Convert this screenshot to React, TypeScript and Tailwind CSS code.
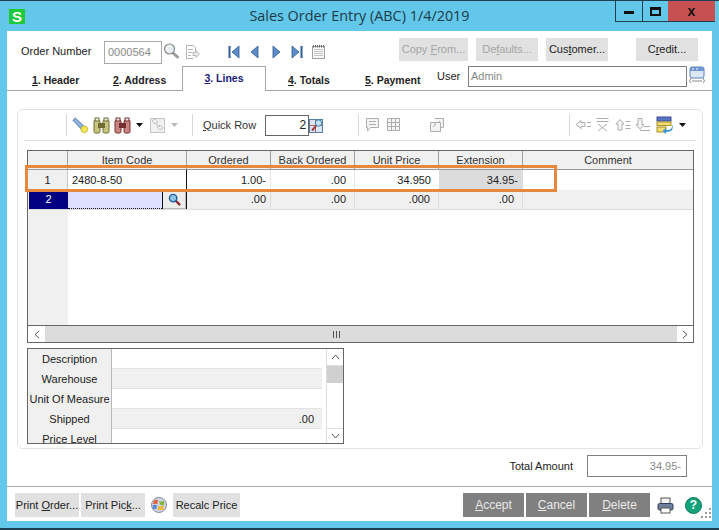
import React from "react";

const COLS = "grid grid-cols-[40px_119px_84px_84px_84px_84px_1fr]";

function Lens({ className = "" }: { className?: string }) {
  return (
    <svg viewBox="0 0 16 16" className={className}>
      <path d="M9.5 9.5 14.5 14" stroke="#9a9a9a" strokeWidth="3" strokeLinecap="round" />
      <circle cx="6.5" cy="6" r="5" fill="#e8eef2" stroke="#8a8a8a" strokeWidth="1.2" />
      <path d="M3.5 6a3 3 0 0 1 3-3" stroke="#fff" strokeWidth="1.2" fill="none" />
    </svg>
  );
}

function DocArrow() {
  return (
    <svg viewBox="0 0 16 16" className="w-4 h-4 ml-[5px]" fill="none" stroke="#b5b5b5">
      <path d="M2.5 1.5h7l2 2v4M2.5 1.5v13h7" />
      <path d="M4 5.5h5M4 8.5h4M4 11.5h3" />
      <path d="M9 8.5h3v-2l3.5 3.5-3.5 3.500v-2H9z" fill="#eee" />
    </svg>
  );
}

function Nav({ d, bar }: { d: string; bar?: "l" | "r" }) {
  return (
    <svg viewBox="0 0 12 14" className="w-3 h-[14px]">
      <path d={d} fill="#5b8cc8" stroke="#2f5c96" strokeWidth="0.8" />
      {bar === "l" && <rect x="0.5" y="1" width="2" height="12" fill="#2f5c96" />}
      {bar === "r" && <rect x="9.5" y="1" width="2" height="12" fill="#2f5c96" />}
    </svg>
  );
}

function Calendar() {
  return (
    <svg viewBox="0 0 13 14" className="w-[13px] h-[14px]" fill="none" stroke="#c4c4c4">
      <rect x="0.5" y="1.5" width="12" height="12" fill="#f8f8f8" stroke="#a0a0a0" />
      <path d="M1.5 0v2.500M3.500 0v2.500M5.500 0v2.500M7.500 0v2.500M9.500 0v2.500M11.500 0v2.500" stroke="#666" />
      <path d="M2 4.500h9M2 6.500h9M2 8.500h9M2 10.500h9" />
    </svg>
  );
}

function Flashlight() {
  return (
    <svg viewBox="0 0 18 18" className="w-[17px] h-[17px]">
      <path d="M1 3.5 3.5 1l9 8.500-3 3z" fill="#8db2de" stroke="#5a7ca8" />
      <circle cx="13" cy="13" r="3.5" fill="#f4e85a" stroke="#c2b52c" />
    </svg>
  );
}

function Binoculars({ fill, stroke }: { fill: string; stroke: string }) {
  return (
    <svg viewBox="0 0 17 17" className="w-[17px] h-[17px]">
      <rect x="1" y="3" width="6" height="13" rx="1.5" fill={fill} stroke={stroke} />
      <rect x="10" y="3" width="6" height="13" rx="1.5" fill={fill} stroke={stroke} />
      <rect x="2" y="1" width="4" height="3" fill="#eee" stroke={stroke} />
      <rect x="11" y="1" width="4" height="3" fill="#eee" stroke={stroke} />
      <rect x="5" y="6" width="7" height="5" fill={stroke} />
    </svg>
  );
}

function Caret({ color = "#111" }: { color?: string }) {
  return (
    <svg viewBox="0 0 7 4" className="w-[7px] h-1">
      <path d="M0 0h7L3.5 4z" fill={color} />
    </svg>
  );
}

function FadedLinks() {
  return (
    <svg viewBox="0 0 17 17" className="w-[17px] h-[17px]" fill="none" stroke="#c4c4c4">
      <rect x="1.5" y="1.5" width="14" height="14" fill="#f1f1f1" />
      <path d="M3 4l3-2 3 3-3 2zM8 10l3-2 3 3-3 2zM6 6l5 4" />
    </svg>
  );
}

function RowFinder() {
  return (
    <svg viewBox="0 0 15 15" className="w-[15px] h-[15px]">
      <rect x="0.5" y="1.5" width="13" height="13" fill="#dbe6f4" stroke="#5c7fa8" />
      <path d="M1 7.5h12M6.5 2v12" stroke="#b0605e" />
      <circle cx="9.5" cy="5" r="3.2" fill="#bfe3f2" stroke="#3f7fb0" />
      <path d="M7 8 3 12.5" stroke="#a13b3b" strokeWidth="2" />
    </svg>
  );
}

function Gray({ kind }: { kind: string }) {
  const paths: Record<string, React.ReactNode> = {
    note: <path d="M1.5 1.5h12v9h-8l-3 3.5v-3.5h-1zM4 4.5h7M4 7.500h7" />,
    table: <path d="M1.5 1.5h12v12h-12zM1.5 5.500h12M1.5 9.500h12M5.500 1.500v12M9.500 1.500v12" />,
    pages: <path d="M5.500 1.500h9v9h-3M1.500 5.500h10v9h-10zM4 10l3-3h-2M11 4l-2 2" />,
    left: <path d="M1 7.500 6 3.500v2h4v4H6v2zM12 5.500h4M12 9.500h4" />,
    del: <path d="M1.500 1.500h12M1.500 4.500h12M3 7l9 7M12 7l-9 7" />,
    up: <path d="M1 7 5 2.500 9 7H7v6H3V7zM10.500 4.500h5M10.500 8.500h5M10.500 11.500h5" />,
    down: <path d="M3 1.500h4v6h2l-4 4.500-4-4.500h2zM9 9.500h6M5 13.500h10" />,
  };
  return (
    <svg viewBox="0 0 16 16" className="w-4 h-4" fill="#f4f4f4" stroke="#adadad">
      {paths[kind]}
    </svg>
  );
}

function MoveLines() {
  return (
    <svg viewBox="0 0 18 18" className="w-[18px] h-[18px]">
      <rect x="1" y="1" width="14" height="4" fill="#5b78c6" stroke="#3c4f8f" />
      <rect x="1" y="6" width="14" height="3.5" fill="#f4dd72" stroke="#a89225" />
      <rect x="1" y="11" width="9" height="5" fill="#f4dd72" stroke="#a89225" />
      <path d="M16 8c1 5-2 6-6 6v-2l-3.5 3 3.500 3v-2c6 0 8-3 6-8z" fill="#3f97d8" />
    </svg>
  );
}

function LookupSmall() {
  return (
    <svg viewBox="0 0 14 14" className="w-[13px] h-[13px]">
      <path d="M8 8l5 5" stroke="#8a3030" strokeWidth="2.5" />
      <circle cx="5.5" cy="5.5" r="4" fill="#8fc4ea" stroke="#1f5d99" strokeWidth="1.5" />
    </svg>
  );
}

function UserIcon() {
  return (
    <svg viewBox="0 0 16 18" className="w-4 h-[18px]">
      <rect x="1" y="1" width="14" height="11" rx="2" fill="#dde6f4" stroke="#5f83b7" />
      <rect x="1" y="1" width="14" height="4" rx="1.5" fill="#6c94d0" />
      <path d="M3 3h2M7 3h2" stroke="#fff" />
      <path d="M2 12 0.5 15 2 17M14 12l1.5 3L14 17M3 15h10" stroke="#8a8a8a" fill="none" />
    </svg>
  );
}

function Orb() {
  return (
    <svg viewBox="0 0 16 16" className="w-4 h-4">
      <circle cx="8" cy="8" r="7.5" fill="#cfd6e6" stroke="#8c8c99" />
      <path d="M3 3.5c1.5-1 3-1 4 0l-.8 3.8c-1.4-.7-2.8-.7-4.2 0z" fill="#e2603a" />
      <path d="M8.2 3.700c1.5 1 3 1 4.600 0l.6 3.800c-1.500.9-3 .9-4.500 0z" fill="#7fb73c" />
      <path d="M1.800 8.300c1.400-.7 2.800-.7 4.200 0l-.6 4c-1.400-.7-2.500-.7-3.600 0z" fill="#5a88d8" />
      <path d="M7 8.500c1.500.9 3 .9 6.200 0l-.8 4c-2 .9-3.600.9-6 0z" fill="#eab93a" />
    </svg>
  );
}

function Printer() {
  return (
    <svg viewBox="0 0 17 17" className="w-[17px] h-[17px]">
      <rect x="4" y="1" width="9" height="6" fill="#f1f1f1" stroke="#555" />
      <rect x="1" y="6.5" width="15" height="6.5" rx="1.5" fill="#6d7f9c" stroke="#34405a" />
      <rect x="4" y="11" width="9" height="5" fill="#fff" stroke="#555" />
    </svg>
  );
}

function HeadCell({ children }: { children?: React.ReactNode }) {
  return (
    <div className="border-r border-[#a0a0a0] bg-[#f0f0f0] flex items-end justify-center pb-[1px] text-[#333] last:border-r-0">
      {children}
    </div>
  );
}

function Btn({ children, w, off }: { children: React.ReactNode; w: string; off?: boolean }) {
  return (
    <div className={`${w} h-[23px] bg-[#e1e1e1] text-center leading-[23px] ${off ? "text-[#a5a5a5]" : "text-[#222]"}`}>
      {children}
    </div>
  );
}

function DarkBtn({ children }: { children: React.ReactNode }) {
  return (
    <div className="w-[61px] h-[24px] bg-[#808080] text-[#e9e9e9] text-center leading-[24px] text-[12px]">
      {children}
    </div>
  );
}

const DETAILS = [
  { label: "Description", bg: "bg-white", h: "h-[20px]" },
  { label: "Warehouse", bg: "bg-[#f0f0f0]", h: "h-[20px]" },
  { label: "Unit Of Measure", bg: "bg-white", h: "h-[20px]" },
  { label: "Shipped", bg: "bg-[#f0f0f0]", h: "h-[20px]", value: ".00" },
  { label: "Price Level", bg: "bg-white", h: "h-[14px]" },
];

export default function App() {
  return (
    <div className="relative w-[719px] h-[530px] overflow-hidden bg-[#62c7e9] border-t border-b-2 border-[#1d3f52] font-['Liberation_Sans',Arial,sans-serif] text-[11px] text-[#222] flex flex-col">
      {/* title bar */}
      <div className="h-[30px] grid grid-cols-[1fr_auto_1fr] shrink-0">
        <div className="pl-[9px] pt-[8px]">
          <div className="w-4 h-[15px] bg-[#1fc93a] text-white font-bold text-[15px] leading-[15px] text-center">S</div>
        </div>
        <div className="pt-[5px] text-[14.4px] leading-[20px] text-[#1c3a4a] font-['Open_Sans',sans-serif]">
          Sales Order Entry (ABC) 1/4/2019
        </div>
        <div className="flex justify-end pr-[4px]">
          <div className="flex h-[21px] border-b border-l border-[#1d3f52]">
            <div className="w-[27px] border-r border-[#1d3f52] flex items-center justify-center">
              <div className="w-[10px] h-[3px] bg-[#111] mt-[3px]" />
            </div>
            <div className="w-[25px] flex items-center justify-center">
              <div className="w-[11px] h-[9px] border-2 border-t-[3px] border-[#111]" />
            </div>
            <div className="w-[47px] bg-[#c75050] flex items-center justify-center text-[#111] font-bold text-[14px]">x</div>
          </div>
        </div>
      </div>

      {/* window body */}
      <div className="relative mx-[7px] h-[490px] bg-white flex flex-col shrink-0">
        <div className="h-[35px] flex items-start pl-[14px]">
          <div className="w-[83px] mt-[14px] leading-[13px]">Order Number</div>
          <div className="w-[58px] h-[23px] mt-[10px] border border-[#a8a8a8] pl-[3px] leading-[21px] text-[#8a8a8a]">0000564</div>
          <Lens className="w-4 h-4 mt-[12px] ml-[1px]" />
          <div className="mt-[13px]"><DocArrow /></div>
          <div className="flex items-center gap-[9px] mt-[14px] ml-[28px]">
            <Nav bar="l" d="M11 1v12L4 7z" />
            <Nav d="M9 1v12L2 7z" />
            <Nav d="M3 1v12l7-6z" />
            <Nav bar="r" d="M1 1v12l7-6z" />
            <Calendar />
          </div>
          <div className="flex items-start mt-[7px] ml-[74px]">
            <Btn w="w-[69px]" off>Copy <u>F</u>rom...</Btn>
            <div className="w-[8px]" />
            <Btn w="w-[62px]" off>De<u>f</u>aults...</Btn>
            <div className="w-[8px]" />
            <Btn w="w-[62px]">Cus<u>t</u>omer...</Btn>
            <div className="w-[28px]" />
            <Btn w="w-[62px]">C<u>r</u>edit...</Btn>
          </div>
        </div>

        {/* tabs */}
        <div className="h-[25px] flex border-b border-[#a8a8a8] text-[10.5px]">
          <div className="w-[88px] pl-[25px] pt-[8px] font-semibold leading-[13px] text-[#222]"><u>1</u>. Header</div>
          <div className="w-[87px] pl-[18px] pt-[8px] font-semibold leading-[13px]"><u>2</u>. Address</div>
          <div className="relative w-[84px] h-[25px] bg-white border border-b-0 border-[#a8a8a8] text-center pt-[5px] leading-[13px] font-semibold text-[#1a1a7a]"><u>3</u>. Lines</div>
          <div className="w-[87px] pl-[22px] pt-[8px] font-semibold leading-[13px]"><u>4</u>. Totals</div>
          <div className="w-[84px] pl-[12px] pt-[8px] font-semibold leading-[13px]"><u>5</u>. Payment</div>
          <div className="w-[31px] pt-[4px] leading-[13px] text-[11px]">User</div>
          <div className="w-[219px] h-[21px] border border-[#808080] pl-[2px] leading-[19px] text-[#8a8a8a] text-[11px]">Admin</div>
          <div className="ml-[2px]"><UserIcon /></div>
        </div>

        {/* lines card */}
        <div className="mt-[18px] ml-[10px] w-[686px] h-[340px] border border-[#e2e2e2] rounded-md flex flex-col">
          <div className="mx-[6px] h-[31px] border-b border-[#dedede] flex items-center shrink-0">
            <div className="w-[42px]" />
            <div className="h-[22px] border-l border-[#d8d8d8] flex items-center pl-[5px]">
              <Flashlight />
              <div className="ml-[4px]"><Binoculars fill="#c8c57e" stroke="#6f6c36" /></div>
              <div className="ml-[4px]"><Binoculars fill="#c98484" stroke="#762f30" /></div>
              <div className="ml-[5px]"><Caret /></div>
              <div className="ml-[6px]"><FadedLinks /></div>
              <div className="ml-[5px]"><Caret color="#bbb" /></div>
            </div>
            <div className="ml-[14px] h-[22px] border-l border-[#d8d8d8] pl-[10px] flex items-center">
              <span className="text-[#333]"><u>Q</u>uick Row</span>
              <div className="ml-[9px] w-[44px] h-[21px] border border-[#666] text-right pr-[2px] leading-[19px] text-[12px]">2</div>
              <RowFinder />
            </div>
            <div className="ml-[34px] h-[22px] border-l border-[#d8d8d8] pl-[6px] flex items-center gap-[5px]">
              <Gray kind="note" />
              <Gray kind="table" />
              <div className="ml-[22px]"><Gray kind="pages" /></div>
            </div>
            <div className="ml-[124px] h-[22px] border-l border-[#d8d8d8] pl-[5px] flex items-center gap-[4px]">
              <Gray kind="left" />
              <Gray kind="del" />
              <Gray kind="up" />
              <Gray kind="down" />
              <div className="ml-[1px]"><MoveLines /></div>
              <div className="ml-[1px]"><Caret /></div>
            </div>
          </div>

          {/* grid */}
          <div className="mt-[9px] ml-[9px] w-[667px] h-[193px] border border-[#666] flex flex-col shrink-0">
            <div className={`${COLS} h-[19px] border-b border-[#9a9a9a] shrink-0`}>
              <HeadCell />
              <HeadCell>Item Code</HeadCell>
              <HeadCell>Ordered</HeadCell>
              <HeadCell>Back Ordered</HeadCell>
              <HeadCell>Unit Price</HeadCell>
              <HeadCell>Extension</HeadCell>
              <HeadCell>Comment</HeadCell>
            </div>
            <div className={`${COLS} h-[20px] shrink-0 leading-[20px]`}>
              <div className="bg-[#f0f0f0] text-center border-r border-[#c8c8c8]">1</div>
              <div className="pl-[4px] border-r border-[#111]">2480-8-50</div>
              <div className="text-right pr-[4px] border-r border-[#e8e8e8]">1.00-</div>
              <div className="text-right pr-[8px] border-r border-[#e8e8e8]">.00</div>
              <div className="text-right pr-[8px]">34.950</div>
              <div className="text-right pr-[5px] bg-[#dcdcdc]">34.95-</div>
              <div />
            </div>
            <div className={`${COLS} h-[20px] shrink-0 leading-[18px] bg-[#f0f0f0] border-b border-[#dcdcdc]`}>
              <div className="bg-[#000080] text-white text-center ml-[1px]">2</div>
              <div className="flex border-r border-[#111]">
                <div className="w-[94px] bg-[#dfe0ff] border-b border-dotted border-[#111]" />
                <div className="w-[1px] bg-[#111]" />
                <div className="flex-1 bg-[#ececec] border-b border-r border-[#bbb] flex items-center justify-center"><LookupSmall /></div>
              </div>
              <div className="text-right pr-[4px] border-r border-[#dcdcdc]">.00</div>
              <div className="text-right pr-[8px] border-r border-[#dcdcdc]">.00</div>
              <div className="text-right pr-[8px] border-r border-[#dcdcdc]">.000</div>
              <div className="text-right pr-[8px] border-r border-[#dcdcdc]">.00</div>
              <div />
            </div>
            <div className="flex-1 flex min-h-0">
              <div className="w-[40px] bg-[#f0f0f0]" />
            </div>
            <div className="h-[17px] shrink-0 flex bg-[#dcdcdc] border-t border-[#666]">
              <div className="w-[17px] bg-white flex items-center justify-center">
                <svg viewBox="0 0 6 9" className="w-[6px] h-[9px]" fill="none" stroke="#555"><path d="M5 1 1 4.5 5 8" /></svg>
              </div>
              <div className="flex-1 flex items-center justify-center pr-[50px]">
                <div className="w-[1px] h-[7px] bg-[#555]" />
                <div className="w-[1px] h-[7px] bg-[#555] ml-[2px]" />
                <div className="w-[1px] h-[7px] bg-[#555] ml-[2px]" />
              </div>
              <div className="w-[16px] bg-white flex items-center justify-center">
                <svg viewBox="0 0 6 9" className="w-[6px] h-[9px]" fill="none" stroke="#555"><path d="M1 1 5 4.5 1 8" /></svg>
              </div>
            </div>
          </div>

          {/* detail panel */}
          <div className="mt-[5px] ml-[9px] w-[317px] h-[96px] border border-[#666] flex shrink-0 overflow-hidden">
            <div className="w-[294px] flex flex-col">
              {DETAILS.map((d) => (
                <div key={d.label} className={`flex ${d.h} shrink-0 ${d.bg} border-b border-[#e4e4e4] last:border-b-0`}>
                  <div className="w-[84px] h-[20px] shrink-0 bg-[#f0f0f0] border-r border-[#b8b8b8] text-center leading-[20px] whitespace-nowrap">{d.label}</div>
                  <div className="flex-1 text-right pr-[8px] leading-[20px]">{d.value}</div>
                </div>
              ))}
            </div>
            <div className="flex-1 ml-[4px] border-l border-[#ddd] flex flex-col">
              <div className="h-[17px] flex items-center justify-center border-b border-[#ddd]">
                <svg viewBox="0 0 9 6" className="w-[9px] h-[6px]" fill="none" stroke="#555"><path d="M1 5 4.5 1 8 5" /></svg>
              </div>
              <div className="h-[17px] bg-[#d0d0d0]" />
              <div className="flex-1" />
              <div className="h-[15px] flex items-center justify-center border-t border-[#ddd]">
                <svg viewBox="0 0 9 6" className="w-[9px] h-[6px]" fill="none" stroke="#555"><path d="M1 1 4.5 5 8 1" /></svg>
              </div>
            </div>
          </div>
        </div>

        {/* total */}
        <div className="mt-[6px] h-[22px] flex items-center justify-end pr-[25px] shrink-0">
          <span>Total Amount</span>
          <div className="ml-[14px] w-[100px] h-[22px] border border-[#808080] text-right pr-[5px] leading-[20px] text-[#8a8a8a]">34.95-</div>
        </div>

        {/* footer */}
        <div className="mt-[9px] flex-1 border-t border-[#a8a8a8] pt-[6px] pl-[8px] flex items-start">
          <div className="w-[64px] h-[24px] bg-[#e1e1e1] text-center leading-[24px]">Print <u>O</u>rder...</div>
          <div className="ml-[2px] w-[64px] h-[24px] bg-[#e1e1e1] text-center leading-[24px]">Print Pic<u>k</u>...</div>
          <div className="ml-[6px] mt-[4px]"><Orb /></div>
          <div className="ml-[6px] w-[67px] h-[24px] bg-[#e1e1e1] text-center leading-[24px]">Recalc Price</div>
          <div className="ml-[223px] flex gap-[2px]">
            <DarkBtn><u>A</u>ccept</DarkBtn>
            <DarkBtn><u>C</u>ancel</DarkBtn>
            <DarkBtn><u>D</u>elete</DarkBtn>
          </div>
          <div className="ml-[7px] mt-[4px]"><Printer /></div>
          <div className="ml-[11px] mt-[4px] w-[17px] h-[17px] rounded-full bg-[#13a37a] border border-[#0b7a5a] text-white text-center font-bold text-[12px] leading-[15px]">?</div>
        </div>

        {/* resize grip */}
        <div className="absolute right-[1px] bottom-[3px] text-[#9a9a9a]">
          <svg viewBox="0 0 10 10" className="w-[10px] h-[10px]" fill="currentColor">
            <rect x="8" y="0" width="2" height="2" />
            <rect x="4" y="4" width="2" height="2" />
            <rect x="8" y="4" width="2" height="2" />
            <rect x="0" y="8" width="2" height="2" />
            <rect x="4" y="8" width="2" height="2" />
            <rect x="8" y="8" width="2" height="2" />
          </svg>
        </div>
      </div>

      {/* highlight drawn over the first row */}
      <div className="absolute left-[25px] top-[164px] w-[532px] h-[27px] border-[3px] border-[#e6893f] pointer-events-none" />
    </div>
  );
}
